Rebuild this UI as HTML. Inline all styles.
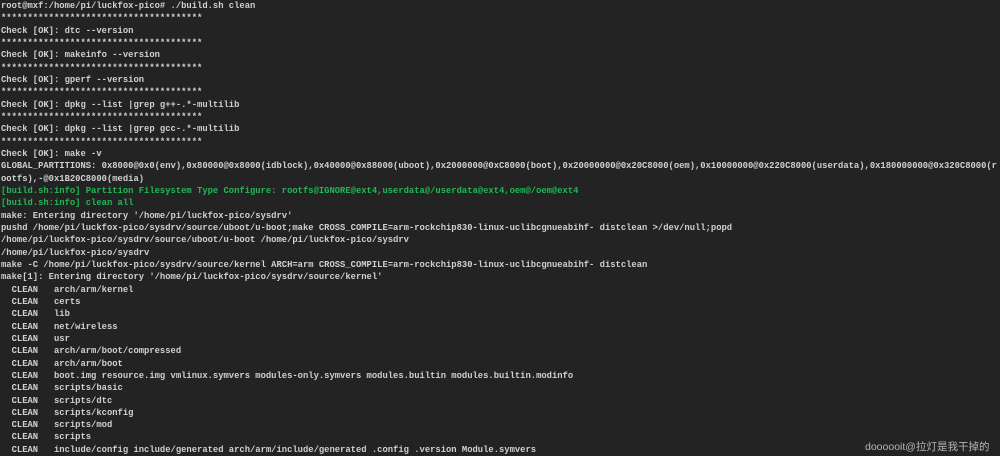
<!DOCTYPE html>
<html><head><meta charset="utf-8"><style>
html,body{margin:0;padding:0;background:#232323;width:1000px;height:456px;overflow:hidden}
pre{margin:0;position:absolute;left:1px;top:0px;font-family:"Liberation Mono",monospace;font-size:8.84px;line-height:12.33px;color:#d0d0d0;font-weight:bold;white-space:pre}
.g{color:#1fb856}
.wm{position:absolute;left:865px;top:439px;font-family:"Liberation Sans","Noto Sans CJK SC",sans-serif;font-size:10.5px;color:#b5b5b5}
</style></head><body>
<pre>root@mxf:/home/pi/luckfox-pico# ./build.sh clean
**************************************
Check [OK]: dtc --version
**************************************
Check [OK]: makeinfo --version
**************************************
Check [OK]: gperf --version
**************************************
Check [OK]: dpkg --list |grep g++-.*-multilib
**************************************
Check [OK]: dpkg --list |grep gcc-.*-multilib
**************************************
Check [OK]: make -v
GLOBAL_PARTITIONS: 0x8000@0x0(env),0x80000@0x8000(idblock),0x40000@0x88000(uboot),0x2000000@0xC8000(boot),0x20000000@0x20C8000(oem),0x10000000@0x220C8000(userdata),0x180000000@0x320C8000(r
ootfs),-@0x1B20C8000(media)
<span class="g">[build.sh:info] Partition Filesystem Type Configure: rootfs@IGNORE@ext4,userdata@/userdata@ext4,oem@/oem@ext4</span>
<span class="g">[build.sh:info] clean all</span>
make: Entering directory '/home/pi/luckfox-pico/sysdrv'
pushd /home/pi/luckfox-pico/sysdrv/source/uboot/u-boot;make CROSS_COMPILE=arm-rockchip830-linux-uclibcgnueabihf- distclean &gt;/dev/null;popd
/home/pi/luckfox-pico/sysdrv/source/uboot/u-boot /home/pi/luckfox-pico/sysdrv
/home/pi/luckfox-pico/sysdrv
make -C /home/pi/luckfox-pico/sysdrv/source/kernel ARCH=arm CROSS_COMPILE=arm-rockchip830-linux-uclibcgnueabihf- distclean
make[1]: Entering directory '/home/pi/luckfox-pico/sysdrv/source/kernel'
  CLEAN   arch/arm/kernel
  CLEAN   certs
  CLEAN   lib
  CLEAN   net/wireless
  CLEAN   usr
  CLEAN   arch/arm/boot/compressed
  CLEAN   arch/arm/boot
  CLEAN   boot.img resource.img vmlinux.symvers modules-only.symvers modules.builtin modules.builtin.modinfo
  CLEAN   scripts/basic
  CLEAN   scripts/dtc
  CLEAN   scripts/kconfig
  CLEAN   scripts/mod
  CLEAN   scripts
  CLEAN   include/config include/generated arch/arm/include/generated .config .version Module.symvers</pre>
<div class="wm">doooooit@拉灯是我干掉的</div>
</body></html>
